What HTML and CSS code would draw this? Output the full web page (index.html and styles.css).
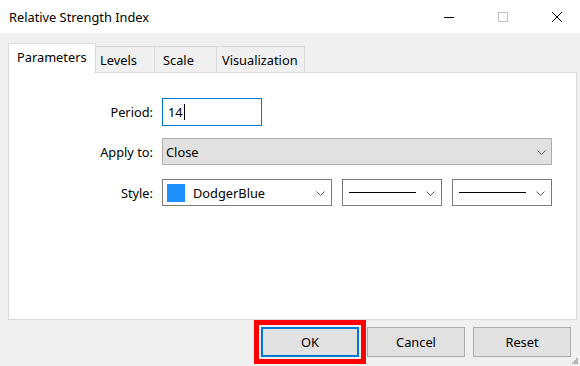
FILE: index.html
```html
<!DOCTYPE html>
<html lang="en">
<head>
<meta charset="utf-8">
<title>Relative Strength Index</title>
<link rel="stylesheet" href="styles.css">
</head>
<body>
<div class="window">
  <div class="titlebar">
    <span class="title">Relative Strength Index</span>
    <div class="controls">
      <svg class="ctl" width="10" height="10" viewBox="0 0 10 10"><path d="M0 5.5H10" stroke="#000" stroke-width="1"/></svg>
      <svg class="ctl" width="10" height="10" viewBox="0 0 10 10"><rect x="0.5" y="0.5" width="9" height="9" fill="none" stroke="#c4c4c4" stroke-width="1"/></svg>
      <svg class="ctl" width="10" height="10" viewBox="0 0 10 10"><path d="M0 0L10 10M10 0L0 10" stroke="#000" stroke-width="1"/></svg>
    </div>
  </div>
  <div class="body">
    <div class="tabs">
      <div class="tab active w-params">Parameters</div>
      <div class="tab w-levels">Levels</div>
      <div class="tab w-scale">Scale</div>
      <div class="tab w-vis">Visualization</div>
    </div>
    <div class="panel">
      <div class="form">
        <label class="lbl r1">Period:</label>
        <div class="field r1"><div class="input"><span>14</span><span class="caret"></span></div></div>
        <label class="lbl r2">Apply to:</label>
        <div class="field r2">
          <div class="select grey wide"><span>Close</span>
            <svg class="chev" width="9" height="5" viewBox="0 0 9 5"><path d="M0.5 0.5L4.5 4.5L8.5 0.5" fill="none" stroke="#606060" stroke-width="1"/></svg>
          </div>
        </div>
        <label class="lbl r3">Style:</label>
        <div class="field r3 combos">
          <div class="select white color"><span class="swatch"></span><span>DodgerBlue</span>
            <svg class="chev" width="9" height="5" viewBox="0 0 9 5"><path d="M0.5 0.5L4.5 4.5L8.5 0.5" fill="none" stroke="#606060" stroke-width="1"/></svg>
          </div>
          <div class="select white line"><span class="stroke"></span>
            <svg class="chev" width="9" height="5" viewBox="0 0 9 5"><path d="M0.5 0.5L4.5 4.5L8.5 0.5" fill="none" stroke="#606060" stroke-width="1"/></svg>
          </div>
          <div class="select white line"><span class="stroke"></span>
            <svg class="chev" width="9" height="5" viewBox="0 0 9 5"><path d="M0.5 0.5L4.5 4.5L8.5 0.5" fill="none" stroke="#606060" stroke-width="1"/></svg>
          </div>
        </div>
      </div>
    </div>
    <div class="buttons">
      <button class="btn ok">OK</button>
      <button class="btn">Cancel</button>
      <button class="btn">Reset</button>
    </div>
  </div>
  <div class="grip">
    <svg width="6" height="6" viewBox="0 0 6 6"><rect x="4" y="0" width="2" height="2" fill="#b8b8b8"/><rect x="2" y="2" width="2" height="2" fill="#b8b8b8"/><rect x="4" y="2" width="2" height="2" fill="#b8b8b8"/><rect x="0" y="4" width="2" height="2" fill="#b8b8b8"/><rect x="2" y="4" width="2" height="2" fill="#b8b8b8"/><rect x="4" y="4" width="2" height="2" fill="#b8b8b8"/></svg>
  </div>
</div>
</body>
</html>
```

FILE: styles.css
```css
* { box-sizing: border-box; }
html, body { margin: 0; padding: 0; }
body {
  font-family: "Noto Sans", "Open Sans", sans-serif;
  font-size: 12.8px;
  color: #000;
  background: #f0f0f0;
}
.window {
  width: 580px;
  height: 366px;
  background: #f0f0f0;
  position: relative;
  overflow: hidden;
}
.titlebar {
  height: 33px;
  background: #fff;
  display: flex;
  align-items: center;
  padding-left: 9px;
}
.title { font-size: 12.8px; }
.controls {
  margin-left: auto;
  display: flex;
  align-items: center;
  gap: 44px;
  padding-right: 18px;
}
.ctl { display: block; }
.body { padding-left: 8px; }
.tabs {
  display: flex;
  align-items: flex-end;
  height: 30px;
  margin-top: 10px;
  margin-bottom: -1px;
}
.tab {
  height: 26px;
  margin-bottom: 1px;
  border-top: 1px solid #d9d9d9;
  border-right: 1px solid #d9d9d9;
  line-height: 26px;
  background: #f0f0f0;
  white-space: nowrap;
}
.tab.active {
  height: 30px;
  margin-bottom: 0;
  border-left: 1px solid #d9d9d9;
  background: #fff;
  position: relative;
  z-index: 1;
  line-height: 26px;
}
.w-params { width: 88px; padding-left: 8px; }
.w-levels { width: 59px; padding-left: 4px; }
.w-scale { width: 62px; padding-left: 8px; }
.w-vis { width: 88px; padding-left: 5px; }
.panel {
  width: 569px;
  height: 248px;
  background: #fff;
  border: 1px solid #d9d9d9;
}
.form {
  display: grid;
  grid-template-columns: 144px auto;
  column-gap: 9px;
  padding-top: 25px;
}
.lbl {
  text-align: right;
  display: flex;
  align-items: center;
  justify-content: flex-end;
}
.r2 { margin-top: 12px; }
.r3 { margin-top: 14px; }
.field { display: flex; }
.input {
  width: 100px;
  height: 28px;
  border: 1px solid #0078d7;
  display: flex;
  align-items: center;
  padding-left: 5px;
}
.caret {
  display: inline-block;
  width: 1px;
  height: 16px;
  background: #000;
  margin-left: 1px;
}
.select {
  height: 27px;
  display: flex;
  align-items: center;
  position: relative;
}
.select .chev { position: absolute; top: 11px; }
.grey {
  background: #e1e1e1;
  border: 1px solid #adadad;
  padding-left: 3px;
}
.wide { width: 390px; }
.wide .chev { right: 5px; }
.white {
  background: #fff;
  border: 1px solid #7a7a7a;
}
.combos { gap: 10px; }
.color { width: 170px; padding-left: 4px; }
.color .chev { right: 6px; }
.swatch {
  width: 18px;
  height: 18px;
  background: #1e90ff;
  margin-right: 8px;
}
.line { width: 100px; padding-left: 6px; }
.line .chev { right: 6px; }
.stroke {
  width: 67px;
  height: 1px;
  background: #000;
}
.buttons {
  display: flex;
  justify-content: flex-end;
  gap: 8px;
  padding-right: 9px;
  margin-top: 7px;
}
.btn {
  width: 98px;
  height: 30px;
  background: #e1e1e1;
  border: 1px solid #adadad;
  font-family: "Noto Sans", "Open Sans", sans-serif;
  font-size: 12.8px;
  color: #000;
  padding: 0;
}
.btn.ok {
  border: 2px solid #0078d7;
  box-shadow: 0 0 0 2px #f0f0f0, 0 0 0 7px #ff0000;
}
.grip {
  position: absolute;
  right: 2px;
  bottom: 2px;
  line-height: 0;
}
```
